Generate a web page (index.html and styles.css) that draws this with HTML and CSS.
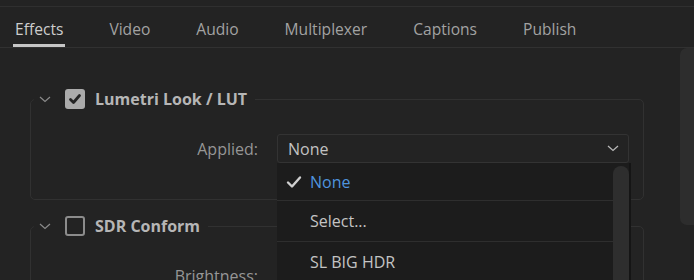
FILE: index.html
```html
<!DOCTYPE html>
<html lang="en">
<head>
    <meta charset="UTF-8">
    <title>Export Settings</title>
    <link rel="stylesheet" href="styles.css">
</head>
<body>
    <div class="tabs">
        <div class="tab active">Effects</div>
        <div class="tab">Video</div>
        <div class="tab">Audio</div>
        <div class="tab">Multiplexer</div>
        <div class="tab">Captions</div>
        <div class="tab">Publish</div>
    </div>

    <div class="main">
        <div class="content">
            <!-- Lumetri -->
            <fieldset class="section">
                <legend class="section-head">
                    <svg class="twisty" width="12" height="7" viewBox="0 0 12 7"><path d="M1 1l5 4.5L11 1" fill="none" stroke="#8a8a8a" stroke-width="1.2"/></svg>
                    <span class="check on">
                        <svg width="20" height="20" viewBox="0 0 20 20"><path d="M5.5 10.5l3 3 6-7" fill="none" stroke="#242424" stroke-width="2.8" stroke-linecap="round" stroke-linejoin="round"/></svg>
                    </span>
                    <span class="title">Lumetri Look / LUT</span>
                </legend>
                <div class="row">
                    <label class="label">Applied:</label>
                    <div class="select">
                        <span>None</span>
                        <svg width="12" height="7" viewBox="0 0 12 7"><path d="M1 1l5 4.5L11 1" fill="none" stroke="#b8b8b8" stroke-width="1.3"/></svg>
                        <div class="menu">
                            <div class="menu-list">
                                <div class="item selected">
                                    <svg class="tick" width="16" height="14" viewBox="0 0 16 14"><path d="M2 7.5l4 4 8-9" fill="none" stroke="#cfcfcf" stroke-width="2.4" stroke-linecap="round" stroke-linejoin="round"/></svg>
                                    None
                                </div>
                                <div class="item">Select...</div>
                                <div class="item">SL BIG HDR</div>
                            </div>
                            <div class="menu-scroll"><div class="menu-thumb"></div></div>
                        </div>
                    </div>
                </div>
            </fieldset>

            <!-- SDR -->
            <fieldset class="section second">
                <legend class="section-head">
                    <svg class="twisty" width="12" height="7" viewBox="0 0 12 7"><path d="M1 1l5 4.5L11 1" fill="none" stroke="#8a8a8a" stroke-width="1.2"/></svg>
                    <span class="check"></span>
                    <span class="title">SDR Conform</span>
                </legend>
                <div class="row">
                    <label class="label">Brightness:</label>
                    <div class="field"></div>
                </div>
            </fieldset>
        </div>
        <div class="scrollbar"><div class="thumb"></div></div>
    </div>
</body>
</html>
```

FILE: styles.css
```css
body {
    margin: 0;
    height: 280px;
    overflow: hidden;
    background-color: #232323;
    font-family: "Open Sans", "DejaVu Sans", sans-serif;
    font-size: 16px;
    color: #b8b8b8;
}
.tabs {
    display: flex;
    gap: 42px;
    margin-top: 6px;
    padding-left: 13px;
    height: 40px;
    border-top: 1px solid #2f2f2f;
    border-bottom: 1px solid #313131;
}
.tab {
    padding: 11px 2px 2px;
    font-size: 15.6px;
    line-height: 22px;
    color: #a2a2a2;
    border-bottom: 3px solid transparent;
}
.tab.active {
    color: #cdcdcd;
    border-bottom-color: #c6c6c6;
}
.main {
    display: flex;
    height: 232px;
}
.content {
    flex: 1;
    padding: 40px 0 0 30px;
}
.scrollbar {
    width: 14px;
}
.thumb {
    height: 177px;
    background-color: #2d2d2d;
    border-radius: 7px 0 0 7px;
}
.section {
    width: 614px;
    margin: 0;
    padding: 0 14px 36px 0;
    border: 1px solid #313131;
    border-radius: 5px;
    box-sizing: border-box;
}
.section.second {
    margin-top: 15px;
}
.section-head {
    display: flex;
    align-items: center;
    height: 22px;
    margin-left: 3px;
    padding: 0 8px 0 5px;
}
.twisty {
    margin-right: 14px;
}
.check {
    width: 20px;
    height: 20px;
    box-sizing: border-box;
    border: 2px solid #8c8c8c;
    border-radius: 3px;
    margin-right: 10px;
}
.check.on {
    border: none;
    background-color: #ababab;
}
.check svg {
    display: block;
}
.title {
    font-weight: bold;
    color: #b6b6b6;
}
.row {
    display: flex;
    align-items: center;
    margin-top: 24px;
}
.label {
    flex: 0 0 227px;
    text-align: right;
    margin-right: 19px;
    color: #969696;
}
.select, .field {
    position: relative;
    flex: 1;
    height: 29px;
    box-sizing: border-box;
    border: 1px solid #333;
    border-radius: 3px;
    display: flex;
    align-items: center;
    justify-content: space-between;
    padding: 0 9px 0 10px;
    color: #c2c2c2;
}
.menu {
    position: absolute;
    top: 28px;
    left: -1px;
    right: -3px;
    height: 130px;
    display: flex;
    background-color: #1c1c1c;
    border-right: 2px solid #151515;
    z-index: 2;
}
.menu-list {
    flex: 1;
}
.item {
    height: 40px;
    display: flex;
    align-items: center;
    padding-left: 33px;
    border-bottom: 1px solid #2e2e2e;
    color: #c4c4c4;
}
.item.selected {
    height: 37px;
    padding-left: 9px;
    color: #4f94de;
}
.tick {
    margin-right: 8px;
}
.menu-scroll {
    width: 16px;
    padding-top: 3px;
}
.menu-thumb {
    height: 200px;
    background-color: #2e2e2e;
    border-radius: 8px 8px 0 0;
}
```
